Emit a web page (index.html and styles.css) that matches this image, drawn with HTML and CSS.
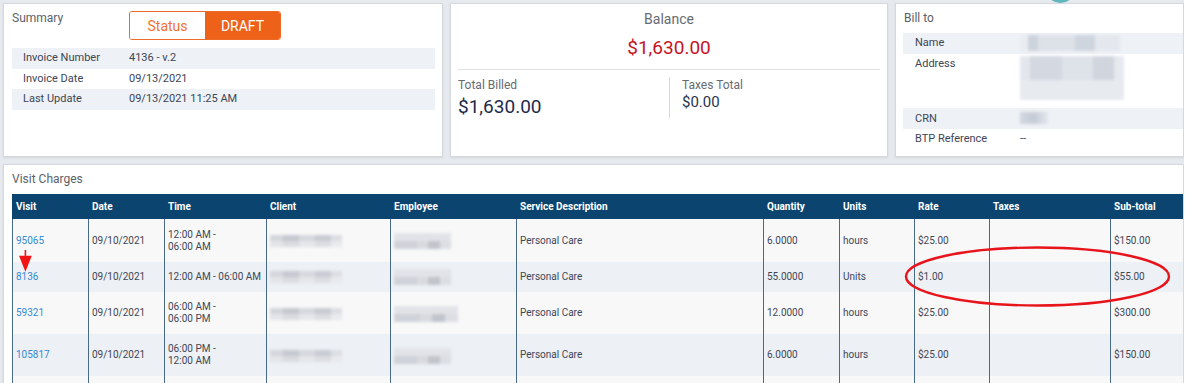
FILE: index.html
```html
<!DOCTYPE html>
<html lang="en">
<head>
<meta charset="utf-8">
<title>Invoice</title>
<link rel="stylesheet" href="styles.css">
</head>
<body>
<div class="page">
  <span class="fab"></span>
  <div class="top-row">
    <section class="card summary">
      <div class="card-head">
        <h2 class="card-title title-fixed">Summary</h2>
        <div class="status">
          <span class="status-label">Status</span>
          <span class="status-value">DRAFT</span>
        </div>
      </div>
      <dl class="kv kv-summary">
        <div class="kv-row"><dt>Invoice Number</dt><dd>4136 - v.2</dd></div>
        <div class="kv-row"><dt>Invoice Date</dt><dd>09/13/2021</dd></div>
        <div class="kv-row"><dt>Last Update</dt><dd>09/13/2021 11:25 AM</dd></div>
      </dl>
    </section>

    <section class="card balance">
      <div class="bal-title">Balance</div>
      <div class="bal-amount">$1,630.00</div>
      <div class="bal-split">
        <div class="bal-col">
          <div class="bal-label">Total Billed</div>
          <div class="bal-big">$1,630.00</div>
        </div>
        <div class="bal-col bal-col-right">
          <div class="bal-label">Taxes Total</div>
          <div class="bal-small">$0.00</div>
        </div>
      </div>
    </section>

    <section class="card billto">
      <div class="card-head">
        <h2 class="card-title">Bill to</h2>
      </div>
      <dl class="kv kv-bill">
        <div class="kv-row row-name"><dt>Name</dt><dd><span class="blur blur-name"></span></dd></div>
        <div class="kv-row row-address"><dt>Address</dt><dd><span class="blur blur-address"></span></dd></div>
        <div class="kv-row row-crn"><dt>CRN</dt><dd><span class="blur blur-crn"></span></dd></div>
        <div class="kv-row row-btp"><dt>BTP Reference</dt><dd>--</dd></div>
      </dl>
    </section>
  </div>

  <section class="card charges">
    <h2 class="card-title charges-title">Visit Charges</h2>
    <table class="grid">
      <colgroup>
        <col class="c-visit"><col class="c-date"><col class="c-time"><col class="c-client"><col class="c-emp"><col class="c-svc"><col class="c-qty"><col class="c-units"><col class="c-rate"><col class="c-tax"><col class="c-sub">
      </colgroup>
      <thead>
        <tr>
          <th>Visit</th><th>Date</th><th>Time</th><th>Client</th><th>Employee</th><th>Service Description</th><th>Quantity</th><th>Units</th><th>Rate</th><th>Taxes</th><th>Sub-total</th>
        </tr>
      </thead>
      <tbody>
        <tr class="r-first">
          <td><a class="link" href="#">95065</a></td>
          <td>09/10/2021</td>
          <td>12:00 AM -<br>06:00 AM</td>
          <td><span class="blur blur-client"></span></td>
          <td><span class="blur blur-emp"></span></td>
          <td>Personal Care</td>
          <td>6.0000</td>
          <td>hours</td>
          <td>$25.00</td>
          <td></td>
          <td>$150.00</td>
        </tr>
        <tr class="r-short">
          <td><a class="link" href="#">8136</a></td>
          <td>09/10/2021</td>
          <td class="nowrap">12:00 AM - 06:00 AM</td>
          <td><span class="blur blur-client"></span></td>
          <td><span class="blur blur-emp"></span></td>
          <td>Personal Care</td>
          <td>55.0000</td>
          <td>Units</td>
          <td>$1.00</td>
          <td></td>
          <td>$55.00</td>
        </tr>
        <tr class="r-tall">
          <td><a class="link" href="#">59321</a></td>
          <td>09/10/2021</td>
          <td>06:00 AM -<br>06:00 PM</td>
          <td><span class="blur blur-client"></span></td>
          <td><span class="blur blur-emp blur-emp-wide"></span></td>
          <td>Personal Care</td>
          <td>12.0000</td>
          <td>hours</td>
          <td>$25.00</td>
          <td></td>
          <td>$300.00</td>
        </tr>
        <tr class="r-tall">
          <td><a class="link" href="#">105817</a></td>
          <td>09/10/2021</td>
          <td>06:00 PM -<br>12:00 AM</td>
          <td><span class="blur blur-client"></span></td>
          <td><span class="blur blur-emp"></span></td>
          <td>Personal Care</td>
          <td>6.0000</td>
          <td>hours</td>
          <td>$25.00</td>
          <td></td>
          <td>$150.00</td>
        </tr>
        <tr class="r-short">
          <td></td><td></td><td></td><td></td><td></td><td></td><td></td><td></td><td></td><td></td><td></td>
        </tr>
      </tbody>
    </table>

    <svg class="mark-arrow" width="14" height="23" viewBox="0 0 14 23" aria-hidden="true">
      <rect x="5.6" y="0" width="1.6" height="7" fill="#f01414"/>
      <polygon points="0,5.7 12.8,5.7 6.4,21.8" fill="#f01414"/>
    </svg>
    <svg class="mark-ellipse" width="270" height="64" viewBox="0 0 270 64" aria-hidden="true">
      <ellipse cx="133.5" cy="31.5" rx="131.5" ry="29" fill="none" stroke="#e8141b" stroke-width="2.4"/>
    </svg>
  </section>
</div>
</body>
</html>
```

FILE: styles.css
```css
* {
  box-sizing: border-box;
  margin: 0;
  padding: 0;
}

html,
body {
  background: #ffffff;
}

body {
  font-family: Roboto, "Liberation Sans", sans-serif;
  color: #3c4656;
}

.page {
  position: relative;
  width: 1184px;
  height: 383px;
  overflow: hidden;
  padding: 3px 0 0 3px;
  background: #e6e9ed;
}

.fab {
  position: absolute;
  left: 1045px;
  top: -28px;
  width: 31px;
  height: 31px;
  border-radius: 50%;
  background: #62b6c0;
}

.top-row {
  display: grid;
  grid-template-columns: 440px 438px 1fr;
  column-gap: 7px;
  height: 154px;
}

.card {
  background: #ffffff;
  border: 1px solid #d5d9de;
  box-shadow: 0 1px 2px rgba(0, 0, 0, 0.08);
}

.card-head {
  display: flex;
  align-items: flex-start;
  padding: 7px 0 0 8px;
}

.card-title {
  font-size: 12px;
  font-weight: 400;
  line-height: 14px;
  color: #5c6169;
}

.title-fixed {
  width: 117px;
  flex: none;
}

/* status pill */
.status {
  display: flex;
  height: 29px;
  border: 1px solid #ee6a28;
  border-radius: 3px;
  overflow: hidden;
  font-size: 14px;
}

.status-label,
.status-value {
  width: 75px;
  display: flex;
  align-items: center;
  justify-content: center;
}

.status-label {
  color: #f0722f;
  background: #ffffff;
}

.status-value {
  color: #ffffff;
  background: #ee6119;
}

/* key-value lists */
.kv-row {
  display: flex;
  font-size: 11px;
  line-height: 20.5px;
  padding-left: 11px;
  color: #3c4656;
}

.kv-row:nth-child(odd) {
  background: #eef1f5;
}

.kv dt {
  flex: none;
}

.kv-summary {
  margin: 8px 7px 0 8px;
}

.kv-summary dt {
  width: 106px;
}

.kv-bill {
  margin: 8px 0 0 7px;
}

.kv-bill .kv-row {
  padding-left: 12px;
}

.kv-bill dt {
  width: 105px;
}

.row-name {
  height: 20.6px;
}

.row-address {
  height: 54px;
}

.row-crn {
  height: 21.4px;
  line-height: 21.4px;
}

/* balance card */
.balance {
  padding: 5px 7px 0;
}

.bal-title {
  text-align: center;
  font-size: 14px;
  line-height: 20px;
  color: #666b73;
}

.bal-amount {
  text-align: center;
  font-size: 19px;
  line-height: 26px;
  color: #c5141f;
  margin-top: 6px;
  padding-bottom: 8px;
  border-bottom: 1px solid #dde0e4;
}

.bal-split {
  display: flex;
  padding-top: 7px;
}

.bal-col {
  width: 211px;
  flex: none;
  height: 41px;
}

.bal-col-right {
  flex: 1;
  border-left: 1px solid #d5d9de;
  padding-left: 12px;
}

.bal-label {
  font-size: 12px;
  line-height: 16px;
  color: #666b73;
}

.bal-big {
  font-size: 19px;
  line-height: 24px;
  margin-top: 2px;
  color: #1e2b4c;
}

.bal-small {
  font-size: 15px;
  line-height: 18px;
  color: #28344f;
}

/* blurred placeholders */
.blur {
  display: inline-block;
  vertical-align: middle;
  filter: blur(1.8px);
}

.blur-name {
  width: 100px;
  height: 16px;
  margin-top: 2px;
  vertical-align: top;
  background:
    linear-gradient(90deg, #e9ecf1 0 8%, #cdd3dd 8% 18%, #dde1e8 18% 55%, #cfd5df 55% 75%, #e4e8ee 75%);
}

.blur-address {
  width: 104px;
  height: 44px;
  margin-top: 2px;
  vertical-align: top;
  background:
    linear-gradient(180deg, transparent 0 55%, #e7eaef 55%),
    linear-gradient(90deg, #e3e7ed 0 10%, #d3d8e1 10% 40%, #dee2e9 40% 70%, #d0d5de 70% 90%, #e6e9ee 90%);
}

.blur-crn {
  width: 28px;
  height: 12px;
  margin-top: 4px;
  vertical-align: top;
  background: linear-gradient(90deg, #d2d7e0, #c5cbd6 50%, #e2e6ec);
}

/* charges */
.charges {
  position: relative;
  margin-top: 7px;
  height: 230px;
  padding: 7px 0 0 8px;
}

.charges-title {
  margin-bottom: 8px;
}

.grid {
  width: 1171px;
  table-layout: fixed;
  border-collapse: separate;
  border-spacing: 0;
  font-size: 10px;
}

.c-visit { width: 76px; }
.c-date { width: 76px; }
.c-time { width: 102px; }
.c-client { width: 124px; }
.c-emp { width: 126px; }
.c-svc { width: 247px; }
.c-qty { width: 76px; }
.c-units { width: 75px; }
.c-rate { width: 75px; }
.c-tax { width: 121px; }
.c-sub { width: 73px; }

.grid th {
  height: 25px;
  padding: 0 4px 0 3px;
  text-align: left;
  font-weight: 700;
  color: #ffffff;
  background: #0b446f;
  border-left: 1px solid #0b446f;
}

.grid td {
  padding: 9px 4px 9px 3px;
  line-height: 12px;
  vertical-align: middle;
  color: #3e4757;
  border-left: 1px solid #47698a;
}

.r-first {
  height: 43px;
}

.r-short {
  height: 30px;
}

.r-tall {
  height: 42px;
}

.grid tbody tr:nth-child(odd) td {
  background: #f8f8f8;
}

.grid tbody tr:nth-child(even) td {
  background: #edf0f4;
}

.nowrap {
  white-space: nowrap;
}

.link {
  color: #348ad6;
  text-decoration: none;
}

.blur-client {
  width: 72px;
  height: 12px;
  background:
    linear-gradient(180deg, transparent 0 50%, rgba(255, 255, 255, 0.35) 50%),
    linear-gradient(90deg, #d4d6dc 0 18%, #c6c8d0 18% 40%, #d6d8de 40% 62%, #c9cbd3 62% 85%, #dcdee3 85%);
}

.blur-emp {
  width: 57px;
  height: 16px;
  margin: -2px 0;
  background:
    linear-gradient(180deg, #e1e3e8 0 48%, transparent 48%),
    linear-gradient(90deg, #d0d2d9 0 40%, #d8dadf 40% 60%, #c2c4cc 60% 80%, #dcdee3 80%);
}

.blur-emp-wide {
  width: 64px;
}

.mark-arrow {
  position: absolute;
  left: 15px;
  top: 85px;
}

.mark-ellipse {
  position: absolute;
  left: 900px;
  top: 80px;
}
```
